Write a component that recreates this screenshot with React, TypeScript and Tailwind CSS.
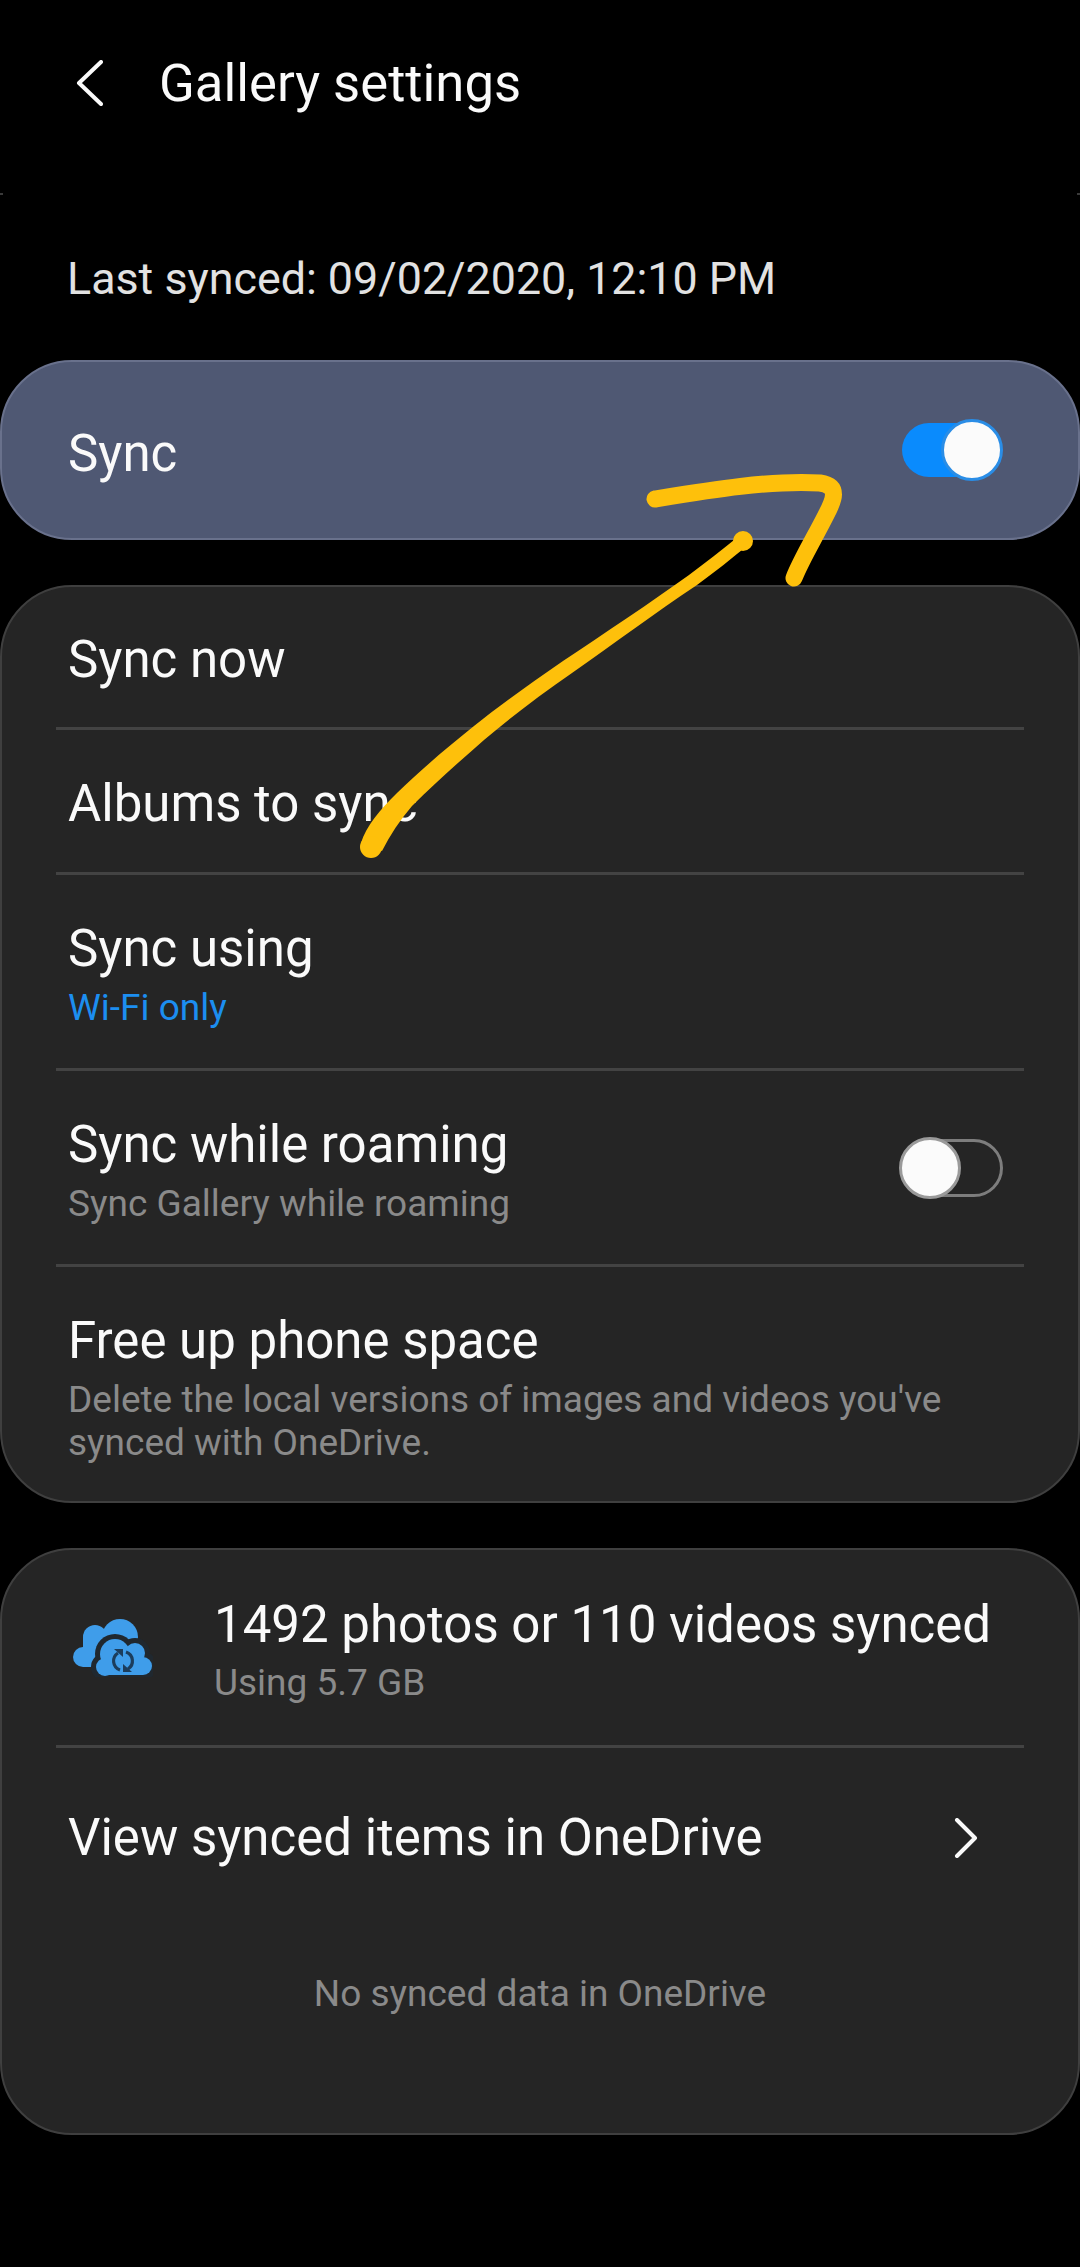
import { ReactNode } from 'react';

const FONT = 'font-["Roboto","Liberation_Sans",sans-serif]';

const Toggle = ({ on }: { on: boolean }) =>
  on ? (
    <div className="relative h-[62px] w-[101px]">
      <div className="absolute left-0 top-[4px] h-[54px] w-[90px] rounded-full bg-[#0a8bfd]" />
      <div className="absolute right-0 top-0 h-[62px] w-[62px] rounded-full border-[3px] border-[#2a8de6] bg-[#fbfbfb]" />
    </div>
  ) : (
    <div className="relative h-[62px] w-[104px]">
      <div className="absolute left-[6px] top-[2px] h-[58px] w-[98px] rounded-full border-[3px] border-[#7d7d7d]" />
      <div className="absolute left-0 top-0 h-[62px] w-[62px] rounded-full border-[3px] border-[#9a9a9a] bg-[#fbfbfb]" />
    </div>
  );

const Row = ({
  height,
  title,
  children,
  right,
  divider = true,
}: {
  height: string;
  title: string;
  children?: ReactNode;
  right?: ReactNode;
  divider?: boolean;
}) => (
  <div className={`${height} mx-[54px] flex items-center justify-between pl-[12px] pr-[21px] ${divider ? 'border-b-[3px] border-[#434343]' : ''}`}>
    <div className={children ? 'pt-[7px]' : 'pt-[5px]'}>
      <div className="text-[51px] leading-[58px] text-[#fafafa]">{title}</div>
      {children}
    </div>
    {right}
  </div>
);

const CloudIcon = () => (
  <svg width="80" height="58" viewBox="0 0 80 58" className="shrink-0">
    {/* back cloud */}
    <g fill="#3f9dea">
      <circle cx="10" cy="38" r="10" />
      <circle cx="22" cy="18" r="12" />
      <circle cx="47" cy="18" r="18" />
      <rect x="10" y="18" width="36" height="30" />
    </g>
    {/* front cloud, with a dark gap round it */}
    <g fill="#20282f">
      <circle cx="42" cy="35" r="20" />
      <circle cx="32" cy="48" r="14" />
      <circle cx="62" cy="34" r="15" />
      <circle cx="70" cy="47" r="14" />
      <rect x="32" y="40" width="38" height="18" />
    </g>
    <g fill="#3f9dea">
      <circle cx="42" cy="35" r="15" />
      <circle cx="32" cy="48" r="9" />
      <circle cx="62" cy="34" r="10" />
      <circle cx="70" cy="47" r="9" />
      <rect x="32" y="36" width="38" height="20" />
    </g>
    <g fill="none" stroke="#1c3d5c" strokeWidth="3.2">
      <path d="M47 51a9.5 9.5 0 0 1-2-17" />
      <path d="M53 33a9.5 9.5 0 0 1 2 17" />
    </g>
    <path fill="#1c3d5c" d="M41 30h9v8ZM59 53h-9v-8Z" />
  </svg>
);

const Scribble = () => (
  <svg width="1080" height="2267" viewBox="0 0 1080 2267" fill="none" className="pointer-events-none absolute left-0 top-0">
    <path
      fill="#fec00b"
      d="M739 536C722 550 705 563 689 575C650 603 605 633 563 661C530 684 500 705 474 726C445 749 420 771 397 793C380 810 366 826 361 843L382 851C390 835 400 820 412 806C435 783 460 761 484 740C510 718 540 695 572 673C615 643 655 613 697 585C715 572 732 558 747 546Z"
    />
    <circle cx="371" cy="847" r="11" fill="#fec00b" />
    <circle cx="743" cy="541" r="10" fill="#fec00b" />
    <path
      d="M655 499C710 490 770 480 820 483C840 486 834 500 826 515C815 537 801 560 794 578"
      stroke="#fec00b"
      strokeWidth="17"
      strokeLinecap="round"
      strokeLinejoin="round"
    />
  </svg>
);

export default function App() {
  return (
    <div className={`${FONT} relative h-[2267px] w-[1080px] overflow-hidden bg-black`}>
      <header className="flex h-[165px] items-center pl-[75px]">
        <svg width="28" height="46" viewBox="0 0 28 46" fill="none">
          <path d="M26 2 4 23l22 21" stroke="#fafafa" strokeWidth="4" strokeLinecap="round" strokeLinejoin="round" />
        </svg>
        <h1 className="ml-[56px] text-[52.6px] font-normal leading-[58px] text-[#fafafa]">Gallery settings</h1>
      </header>

      <div className="flex h-[195px] items-start pl-[67px] pt-[89px] text-[44.8px] leading-[50px] text-[#e2e2e2]">
        Last synced: 09/02/2020, 12:10 PM
      </div>

      <section className="flex h-[180px] items-center justify-between rounded-[72px] border-2 border-[#69718c] bg-[#4f5873] pl-[66px] pr-[75px]">
        <span className="pt-[7px] text-[51px] leading-[58px] text-[#fafafa]">Sync</span>
        <Toggle on />
      </section>

      <section className="mt-[45px] h-[918px] rounded-[72px] border-2 border-[#3f3f3f] bg-[#252525]">
        <Row height="h-[143px]" title="Sync now" />
        <Row height="h-[145px]" title="Albums to sync" />
        <Row height="h-[196px]" title="Sync using">
          <div className="mt-[8px] text-[37px] leading-[44px] text-[#1c8ef0]">Wi-Fi only</div>
        </Row>
        <Row height="h-[196px]" title="Sync while roaming" right={<Toggle on={false} />}>
          <div className="mt-[8px] text-[37px] leading-[44px] text-[#8a8a8a]">Sync Gallery while roaming</div>
        </Row>
        <Row height="h-[235px]" title="Free up phone space" divider={false}>
          <div className="mt-[8px] text-[37px] leading-[43px] text-[#8a8a8a]">
            Delete the local versions of images and videos you've
            <br />
            synced with OneDrive.
          </div>
        </Row>
      </section>

      <section className="mt-[45px] h-[587px] rounded-[72px] border-2 border-[#3f3f3f] bg-[#252525]">
        <div className="mx-[54px] flex h-[198px] items-center gap-[61px] border-b-[3px] border-[#434343] pl-[17px]">
          <CloudIcon />
          <div className="pt-[5px]">
            <div className="whitespace-nowrap text-[51px] leading-[58px] text-[#fafafa]">1492 photos or 110 videos synced</div>
            <div className="mt-[7px] text-[37px] leading-[44px] text-[#8a8a8a]">Using 5.7 GB</div>
          </div>
        </div>
        <div className="mx-[54px] flex h-[180px] items-center justify-between pl-[12px] pr-[46px]">
          <span className="text-[51px] leading-[58px] text-[#fafafa]">View synced items in OneDrive</span>
          <svg width="24" height="40" viewBox="0 0 24 40" fill="none">
            <path d="M3 2l18 18L3 38" stroke="#fafafa" strokeWidth="4" strokeLinecap="round" strokeLinejoin="round" />
          </svg>
        </div>
        <div className="mt-[44px] text-center text-[37px] leading-[44px] text-[#8a8a8a]">No synced data in OneDrive</div>
      </section>

      <div className="absolute left-0 top-[193px] h-[2px] w-[3px] bg-[#3a3a3a]" />
      <div className="absolute right-0 top-[193px] h-[2px] w-[3px] bg-[#3a3a3a]" />

      <Scribble />
    </div>
  );
}
